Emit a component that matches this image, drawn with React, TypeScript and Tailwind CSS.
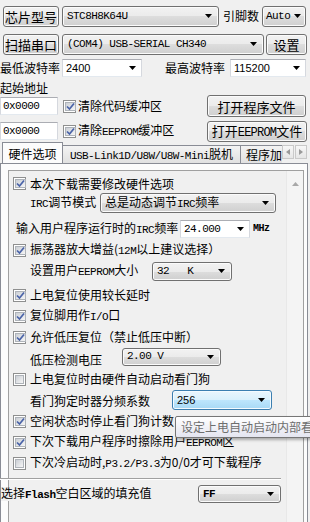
import React from 'react'

const cjk = "font-['Noto_Sans_CJK_SC',sans-serif]"
const mono = "font-['Liberation_Mono','Noto_Sans_CJK_SC',monospace]"
const monoS = `${mono} text-[11px] tracking-[-0.55px]`
const sans = "font-['Liberation_Sans','Noto_Sans_CJK_SC',sans-serif]"

const btnBg =
  'border border-[#707070] rounded-[3px] bg-[linear-gradient(#f2f2f2,#ebebeb_50%,#dddddd_50%,#cfcfcf)] shadow-[inset_0_0_0_1px_#fbfbfb]'
const hotBg =
  'border border-[#3c7fb1] rounded-[3px] bg-[linear-gradient(#eaf6fd,#d9f0fc_50%,#bee6fd_50%,#a7d9f5)] shadow-[inset_0_0_0_1px_#f4fbff]'
const editBg = 'border border-[#abadb3] border-x-[#d5d8de] border-b-[#e3e9ef] bg-white'

function M({ children }: { children: React.ReactNode }) {
  return <span className={monoS}>{children}</span>
}

function Tri() {
  return (
    <svg width="7" height="4" viewBox="0 0 7 4" className="shrink-0">
      <path d="M0 0h7L3.5 4z" fill="#000" />
    </svg>
  )
}

function Btn({ className, children }: { className: string; children: React.ReactNode }) {
  return (
    <div className={`flex items-center justify-center shrink-0 ${btnBg} ${className}`}>
      <span className="whitespace-nowrap">{children}</span>
    </div>
  )
}

// read-only combo, looks like a button
function Combo({ className, children, hot }: { className: string; children: React.ReactNode; hot?: boolean }) {
  return (
    <div className={`flex items-center justify-between shrink-0 pl-[4px] pr-[6px] ${hot ? hotBg : btnBg} ${className}`}>
      <span className="whitespace-pre">{children}</span>
      <Tri />
    </div>
  )
}

// editable combo, white field
function EditCombo({ className, children }: { className: string; children: React.ReactNode }) {
  return (
    <div className={`flex items-center justify-between shrink-0 pl-[3px] pr-[5px] ${editBg} ${className}`}>
      <span className="whitespace-pre">{children}</span>
      <Tri />
    </div>
  )
}

function Check({ on }: { on?: boolean }) {
  return (
    <span className="w-[13px] h-[13px] shrink-0 border border-[#8e8f8f] bg-white p-[1px] flex">
      <span className="flex-1 border border-[#aeb3b9] bg-gradient-to-br from-[#cbcfd5] to-[#f6f6f6] flex items-center justify-center">
        {on && (
          <svg width="9" height="9" viewBox="0 0 9 9">
            <path d="M1 4.5 L3.5 7 L8 1.5" fill="none" stroke="#4a63a8" strokeWidth="1.7" />
          </svg>
        )}
      </span>
    </span>
  )
}

function CheckRow({ on, children }: { on?: boolean; children: React.ReactNode }) {
  return (
    <div className="flex items-center h-[20px] mt-[1px] pl-[4px]">
      <Check on={on} />
      <span className="ml-[4px] whitespace-nowrap">{children}</span>
    </div>
  )
}

export default function App() {
  return (
    <div className={`w-[310px] h-[522px] overflow-hidden bg-[#f0f0f0] text-[12px] leading-none text-black relative ${cjk}`}>
      {/* 芯片型号 */}
      <div className="flex items-center h-[22px] mt-[5px] pl-[3px]">
        <Btn className="w-[56px] h-[21px] text-[13px]">芯片型号</Btn>
        <Combo className={`ml-[3px] w-[157px] h-[21px] ${monoS}`}>STC8H8K64U</Combo>
        <span className="ml-[4px] w-[36px] text-[12px]">引脚数</span>
        <Combo className={`ml-[3px] w-[44px] h-[21px] !pl-[3px] !pr-[4px] ${monoS}`}>Auto</Combo>
      </div>

      {/* 扫描串口 */}
      <div className="flex items-center h-[22px] mt-[6px] pl-[3px]">
        <Btn className="w-[56px] h-[21px] text-[13px]">扫描串口</Btn>
        <Combo className={`ml-[3px] w-[202px] h-[21px] ${monoS}`}>(COM4) USB-SERIAL CH340</Combo>
        <Btn className="ml-[2px] w-[41px] h-[21px] text-[13px]">设置</Btn>
      </div>

      {/* 波特率 */}
      <div className="flex items-center h-[18px] mt-[4px]">
        <span className="w-[60px]">最低波特率</span>
        <EditCombo className={`ml-[2px] w-[80px] h-[18px] ${sans} text-[11px]`}>2400</EditCombo>
        <span className="ml-[23px] w-[60px]">最高波特率</span>
        <EditCombo className={`ml-[5px] w-[76px] h-[18px] ${sans} text-[11px]`}>115200</EditCombo>
      </div>

      <div className="h-[14px] mt-[4px] flex items-center">起始地址</div>

      <div className="flex items-center h-[22px]">
        <div className={`w-[58px] h-[18px] ${editBg} flex items-center pl-[2px] ${monoS}`}>0x0000</div>
        <span className="ml-[5px]">
          <Check on />
        </span>
        <span className="ml-[2px]">清除代码缓冲区</span>
        <Btn className="ml-auto mr-[4px] w-[99px] h-[22px] text-[13px]">打开程序文件</Btn>
      </div>

      <div className="flex items-center h-[22px] mt-[3px]">
        <div className={`w-[58px] h-[18px] ${editBg} flex items-center pl-[2px] ${monoS}`}>0x0000</div>
        <span className="ml-[5px]">
          <Check on />
        </span>
        <span className="ml-[2px]">
          清除<M>EEPROM</M>缓冲区
        </span>
        <Btn className="ml-auto mr-[3px] w-[100px] h-[21px] text-[13px]">
          打开<span className={`${mono} text-[12px] tracking-[-0.8px]`}>EEPROM</span>文件
        </Btn>
      </div>

      {/* tabs */}
      <div className="flex items-end h-[21px] relative z-10">
        <div className="flex items-end flex-1 overflow-hidden h-[21px]">
          <div className="ml-[2px] w-[61px] h-[22px] -mb-px shrink-0 border border-b-0 border-[#898c95] bg-[#fcfcfc] flex items-center justify-center">
            硬件选项
          </div>
          <div className="w-[178px] h-[18px] shrink-0 border border-l-0 border-b-0 border-[#898c95] bg-gradient-to-b from-[#f3f3f3] to-[#e1e1e1] flex items-center justify-center whitespace-nowrap">
            <span>
              <M>USB-Link1D/U8W/U8W-Mini</M>脱机
            </span>
          </div>
          <div className="w-[50px] h-[18px] shrink-0 border border-l-0 border-b-0 border-[#898c95] bg-gradient-to-b from-[#f3f3f3] to-[#e1e1e1] flex items-center pl-[5px] whitespace-nowrap">
            程序加密后传输
          </div>
        </div>
        <div className="flex mb-[4px] mr-[3px] gap-px">
          {[0, 1].map((i) => (
            <div key={i} className="w-[12px] h-[14px] border border-[#c9c9c9] bg-gradient-to-b from-[#f7f7f7] to-[#e6e6e6] flex items-center justify-center">
              <svg width="4" height="6" viewBox="0 0 4 6">
                <path d={i === 0 ? 'M4 0v6L0 3z' : 'M0 0v6l4-3z'} fill="#9a9a9a" />
              </svg>
            </div>
          ))}
        </div>
      </div>

      {/* tab page */}
      <div className="w-[308px] h-[400px] border border-[#898c95] bg-[#fcfcfc] pt-[6px]">
        <div className="ml-[7px] w-[296px] h-[400px] border border-[#a0a0a0] bg-[#f0f0f0] flex">
          <div className="flex-1 pt-[3px]">
            <div className="flex items-center h-[19px] pl-[4px]">
              <Check on />
              <span className="ml-[4px]">本次下载需要修改硬件选项</span>
            </div>
            <div className="flex items-center h-[20px] pl-[21px]">
              <span className="w-[70px]">
                <M>IRC</M>调节模式
              </span>
              <Combo className="w-[176px] h-[20px]">
                总是动态调节<M>IRC</M>频率
              </Combo>
            </div>
            <div className="flex items-center h-[20px] mt-[6px] pl-[7px]">
              <span className="w-[164px] whitespace-nowrap">
                输入用户程序运行时的<M>IRC</M>频率
              </span>
              <EditCombo className={`w-[70px] h-[18px] ${monoS}`}>24.000</EditCombo>
              <span className={`ml-[3px] ${mono} text-[10px] font-bold tracking-[-0.5px]`}>MHz</span>
            </div>
            <div className="mt-[1px]">
              <CheckRow on>
                振荡器放大增益(<M>12M</M>以上建议选择）
              </CheckRow>
            </div>
            <div className="flex items-center h-[20px] mt-[1px] pl-[21px]">
              <span className="w-[122px] whitespace-nowrap">
                设置用户<M>EEPROM</M>大小
              </span>
              <Combo className={`w-[80px] h-[19px] ${monoS}`}>{'32   K'}</Combo>
            </div>
            <div className="mt-[4px]">
              <CheckRow on>上电复位使用较长延时</CheckRow>
            </div>
            <CheckRow on>
              复位脚用作<M>I/O</M>口
            </CheckRow>
            <CheckRow on>允许低压复位（禁止低压中断）</CheckRow>
            <div className="flex items-center h-[19px] pl-[21px]">
              <span className="w-[92px] pt-[6px]">低压检测电压</span>
              <Combo className={`w-[99px] h-[18px] ${monoS}`}>2.00 V</Combo>
            </div>
            <div className="mt-[3px]">
              <CheckRow>上电复位时由硬件自动启动看门狗</CheckRow>
            </div>
            <div className="flex items-center h-[20px] mt-[1px] pl-[21px]">
              <span className="w-[142px] pt-[2px]">看门狗定时器分频系数</span>
              <Combo hot className={`w-[100px] h-[20px] ${sans} text-[11px]`}>
                256
              </Combo>
            </div>
            <div className="mt-[1px]">
              <CheckRow on>空闲状态时停止看门狗计数</CheckRow>
            </div>
            <CheckRow on>
              下次下载用户程序时擦除用户<M>EEPROM</M>区
            </CheckRow>
            <CheckRow>
              下次冷启动时,<M>P3.2/P3.3</M>为0/0才可下载程序
            </CheckRow>
            <div className="relative z-10 -ml-[9px] mr-[5px] mt-[5px] h-[2px] border-t border-[#a0a0a0] border-b border-b-white" />
            <div className="relative z-10 -ml-[8px] flex items-center h-[20px] mt-[4px]">
              <span className="w-[197px] bg-[#f0f0f0]">
                选择<span className={`${mono} text-[11px] font-bold tracking-[-0.5px]`}>Flash</span>空白区域的填充值
              </span>
              <Combo className={`w-[83px] h-[18px] ${monoS} font-bold`}>FF</Combo>
            </div>
          </div>
          <div className="w-[17px] shrink-0 bg-[#f4f4f4] border-l border-[#e8e8e8] flex justify-center pt-[11px]">
            <svg width="7" height="4" viewBox="0 0 7 4">
              <path d="M3.5 0L7 4H0z" fill="#a8a8a8" />
            </svg>
          </div>
        </div>
      </div>

      {/* tooltip */}
      <div className="absolute left-[175px] top-[416px] w-[150px] h-[22px] border border-[#767676] rounded-[2px] bg-gradient-to-b from-white to-[#e4e5f0] shadow-[2px_2px_3px_rgba(0,0,0,0.3)] flex items-center pl-[5px] text-[#6e6e6e] text-[12px] whitespace-nowrap z-20">
        设定上电自动启动内部看门狗
      </div>
    </div>
  )
}
